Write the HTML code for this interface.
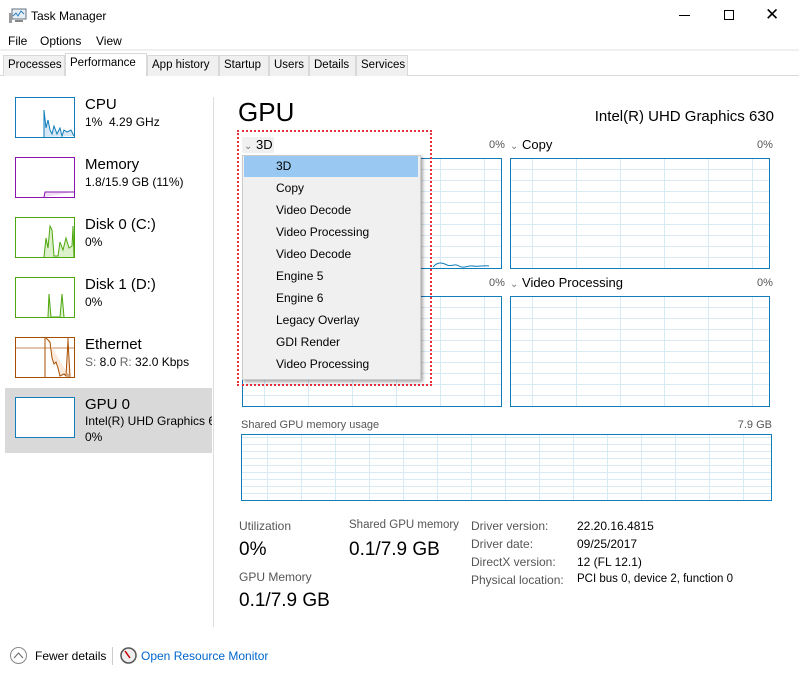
<!DOCTYPE html>
<html><head><meta charset="utf-8"><style>
*{margin:0;padding:0;box-sizing:border-box}
body{width:799px;height:681px;background:#fff;font-family:"Liberation Sans",sans-serif;font-size:12px;color:#000;position:relative;overflow:hidden}
.a{position:absolute;white-space:nowrap}
.tab{position:absolute;top:55px;height:21px;border:1px solid #d9d9d9;border-bottom:none;background:#f0f0f0;font-size:11.5px;padding:3px 4px 0;white-space:nowrap}
.th{position:absolute;left:15px;width:60px;height:41px;border:1px solid}
.t1{position:absolute;left:85px;font-size:15px;white-space:nowrap}
.t2{position:absolute;left:85px;font-size:12px;white-space:nowrap}
.ch{position:absolute;border:1px solid #117dbb;background-color:#fff;
background-image:repeating-linear-gradient(90deg,transparent 0 21px,#d9eaf7 21px 22px,transparent 22px 44px),repeating-linear-gradient(0deg,transparent 0 10px,#d9eaf7 10px 11px);}
.gl{color:#555;font-size:12px}
.mi{position:absolute;left:276px;font-size:12px;white-space:nowrap}
</style></head><body>
<svg class="a" style="left:9px;top:8px" width="18" height="16"><rect x="3" y="1" width="14" height="10" fill="#e8eef5" stroke="#607080"/><polyline points="4,8 7,5 9,8 12,3 15,6" fill="none" stroke="#2a7fc0"/><rect x="0" y="5" width="3" height="10" fill="#999"/><rect x="6" y="12" width="8" height="2" fill="#888"/></svg>
<div class="a" style="left:31px;top:9px;font-size:12px">Task Manager</div>
<div class="a" style="left:679px;top:15px;width:11px;border-top:1px solid #000"></div>
<div class="a" style="left:724px;top:10px;width:10px;height:10px;border:1px solid #000"></div>
<div class="a" style="left:765px;top:5px;font-size:17px;font-weight:300">✕</div>
<div class="a" style="left:8px;top:34px">File</div>
<div class="a" style="left:40px;top:34px">Options</div>
<div class="a" style="left:96px;top:34px">View</div>
<div class="a" style="left:0;top:49px;width:799px;height:2px;background:#f0f0f0"></div>
<div class="a" style="left:0;top:75px;width:799px;border-top:1px solid #d9d9d9"></div>
<div class="tab" style="left:3px;width:62px">Processes</div>
<div class="tab" style="left:65px;top:53px;height:23px;width:82px;background:#fff;z-index:2;padding-top:3px">Performance</div>
<div class="tab" style="left:147px;width:72px">App history</div>
<div class="tab" style="left:219px;width:50px">Startup</div>
<div class="tab" style="left:269px;width:40px">Users</div>
<div class="tab" style="left:309px;width:47px">Details</div>
<div class="tab" style="left:356px;width:52px">Services</div>

<div class="a" style="left:213px;top:97px;height:530px;border-left:1px solid #ddd"></div>
<div class="a" style="left:5px;top:388px;width:207px;height:65px;background:#d9d9d9"></div>

<div class="th" style="top:97px;border-color:#117dbb"><svg width="58" height="39"><polyline points="28,39 28,12 30,30 32,22 34,32 36,36 38,28 41,36 44,30 46,38 48,32 51,34 55,32 58,38" fill="#d6e8f5" stroke="#117dbb"/></svg></div>
<div class="t1" style="top:96px">CPU</div><div class="t2" style="top:115px">1% &nbsp;4.29 GHz</div>
<div class="th" style="top:157px;border-color:#8b12ae"><svg width="58" height="39"><polyline points="28,39 29,34 58,34" fill="#f0e0f5" stroke="#8b12ae"/></svg></div>
<div class="t1" style="top:156px">Memory</div><div class="t2" style="top:175px">1.8/15.9 GB (11%)</div>
<div class="th" style="top:217px;border-color:#4da60c"><svg width="58" height="39"><polyline points="28,39 30,20 32,30 34,8 36,12 38,38 42,38 44,24 47,32 50,20 53,30 56,28 57,8 58,39" fill="#dcf0cc" stroke="#4da60c"/></svg></div>
<div class="t1" style="top:216px">Disk 0 (C:)</div><div class="t2" style="top:235px">0%</div>
<div class="th" style="top:277px;border-color:#4da60c"><svg width="58" height="39"><polyline points="32,39 33,16 35,39 44,39 46,16 48,39" fill="#dcf0cc" stroke="#4da60c"/></svg></div>
<div class="t1" style="top:276px">Disk 1 (D:)</div><div class="t2" style="top:295px">0%</div>
<div class="th" style="top:337px;border-color:#a74f01"><svg width="58" height="39"><line x1="0" y1="10" x2="58" y2="10" stroke="#c88a5a"/><line x1="29" y1="0" x2="29" y2="39" stroke="#a74f01"/><line x1="52" y1="0" x2="52" y2="39" stroke="#a74f01"/><polyline points="30,0 34,4 36,20 38,26 40,24 42,30 44,38 48,36 50,38 52,2 54,39" fill="#fbe9dc" stroke="#a74f01"/></svg></div>
<div class="t1" style="top:336px">Ethernet</div><div class="t2" style="top:355px"><span style="color:#666">S:</span> 8.0 <span style="color:#666">R:</span> 32.0 Kbps</div>
<div class="th" style="top:397px;border-color:#117dbb;background:#fff"></div>
<div class="t1" style="top:396px">GPU 0</div><div class="t2" style="top:414px;width:127px;overflow:hidden">Intel(R) UHD Graphics 630</div><div class="t2" style="top:430px">0%</div>

<div class="a" style="left:238px;top:97px;font-size:26px">GPU</div>
<div class="a" style="right:25px;top:108px;font-size:15px">Intel(R) UHD Graphics 630</div>

<div class="a gl" style="left:489px;top:139px;font-size:11px">0%</div>
<div class="a" style="left:510px;top:137px;font-size:13px"><span style="color:#777;font-size:10px">⌄</span> Copy</div>
<div class="a gl" style="left:757px;top:139px;font-size:11px">0%</div>
<div class="ch" style="left:242px;top:158px;width:260px;height:111px"><svg class="a" style="left:190px;top:98px" width="68" height="12"><path d="M0,10 C5,4 10,6 14,8 S22,6 26,9 S36,8 40,9 S52,8 56,9" fill="none" stroke="#117dbb"/></svg></div>
<div class="ch" style="left:510px;top:158px;width:260px;height:111px"></div>
<div class="a gl" style="left:489px;top:277px;font-size:11px">0%</div>
<div class="a" style="left:510px;top:275px;font-size:13px"><span style="color:#777;font-size:10px">⌄</span> Video Processing</div>
<div class="a gl" style="left:757px;top:277px;font-size:11px">0%</div>
<div class="ch" style="left:242px;top:296px;width:260px;height:111px"></div>
<div class="ch" style="left:510px;top:296px;width:260px;height:111px"></div>

<div class="a gl" style="left:241px;top:419px;font-size:11px">Shared GPU memory usage</div>
<div class="a gl" style="right:27px;top:419px;font-size:11px">7.9 GB</div>
<div class="ch" style="left:241px;top:434px;width:531px;height:67px;background-image:repeating-linear-gradient(90deg,transparent 0 25px,#d9eaf7 25px 26px,transparent 26px 34px),repeating-linear-gradient(0deg,transparent 0 6px,#d9eaf7 6px 7px)"></div>

<div class="a gl" style="left:239px;top:519px">Utilization</div>
<div class="a" style="left:239px;top:539px;font-size:19px">0%</div>
<div class="a gl" style="left:239px;top:570px">GPU Memory</div>
<div class="a" style="left:239px;top:590px;font-size:19px">0.1/7.9 GB</div>
<div class="a gl" style="left:349px;top:519px;font-size:11.5px">Shared GPU memory</div>
<div class="a" style="left:349px;top:539px;font-size:19px">0.1/7.9 GB</div>
<div class="a gl" style="left:471px;top:519px">Driver version:</div>
<div class="a gl" style="left:471px;top:537px">Driver date:</div>
<div class="a gl" style="left:471px;top:555px">DirectX version:</div>
<div class="a gl" style="left:471px;top:573px">Physical location:</div>
<div class="a" style="left:577px;top:519px">22.20.16.4815</div>
<div class="a" style="left:577px;top:537px">09/25/2017</div>
<div class="a" style="left:577px;top:555px">12 (FL 12.1)</div>
<div class="a" style="left:577px;top:573px;font-size:11.5px">PCI bus 0, device 2, function 0</div>

<div class="a" style="left:237px;top:130px;width:195px;height:256px;border:2px dotted #e8303a"></div>
<div class="a" style="left:242px;top:137px;width:32px;height:16px;background:#f0f0f0"></div>
<div class="a" style="left:244px;top:137px;font-size:13px"><span style="color:#777;font-size:10px">⌄</span> 3D</div>
<div class="a" style="left:242px;top:155px;width:179px;height:225px;background:#f0f0f0;border:1px solid #ccc;box-shadow:2px 2px 3px rgba(0,0,0,.35)"></div>
<div class="a" style="left:244px;top:156px;width:174px;height:21px;background:#99c9f2"></div>
<div class="mi" style="top:159px">3D</div>
<div class="mi" style="top:181px">Copy</div>
<div class="mi" style="top:203px">Video Decode</div>
<div class="mi" style="top:225px">Video Processing</div>
<div class="mi" style="top:247px">Video Decode</div>
<div class="mi" style="top:269px">Engine 5</div>
<div class="mi" style="top:291px">Engine 6</div>
<div class="mi" style="top:313px">Legacy Overlay</div>
<div class="mi" style="top:335px">GDI Render</div>
<div class="mi" style="top:357px">Video Processing</div>

<div class="a" style="left:10px;top:647px;width:17px;height:17px;border:1px solid #888;border-radius:50%"></div>
<svg class="a" style="left:13px;top:651px" width="11" height="8"><polyline points="1,7 5.5,2 10,7" fill="none" stroke="#666"/></svg>
<div class="a" style="left:35px;top:649px">Fewer details</div>
<div class="a" style="left:112px;top:647px;height:18px;border-left:1px solid #ccc"></div>
<svg class="a" style="left:120px;top:647px" width="17" height="17"><circle cx="8.5" cy="8.5" r="7.5" fill="#eee" stroke="#555" stroke-width="1.5"/><line x1="5" y1="4" x2="10" y2="11" stroke="#c00" stroke-width="1.5"/></svg>
<div class="a" style="left:141px;top:649px;color:#0066cc">Open Resource Monitor</div>
</body></html>
